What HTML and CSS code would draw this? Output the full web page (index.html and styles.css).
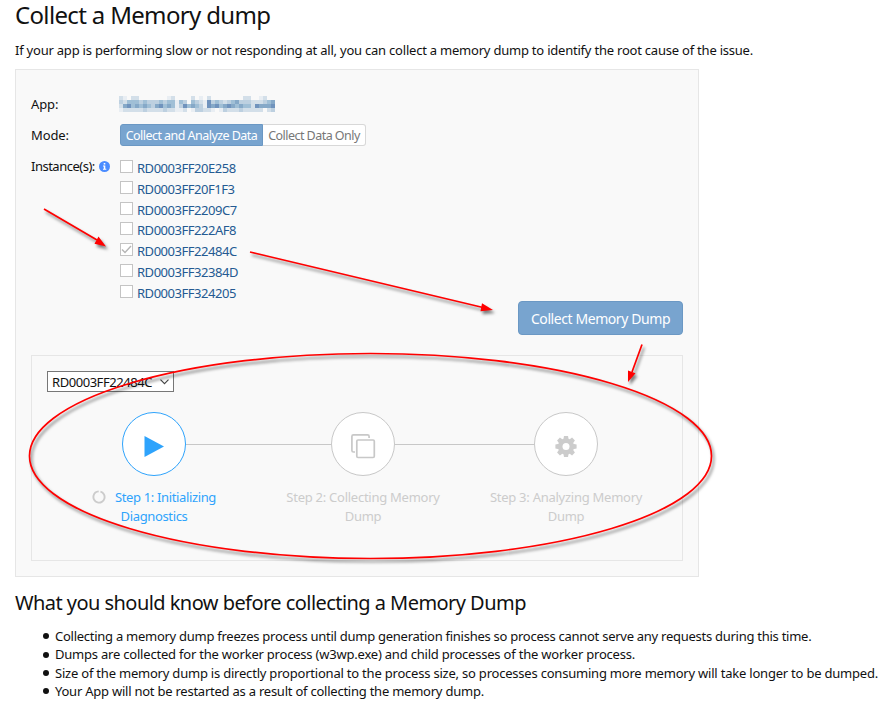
FILE: index.html
```html
<!DOCTYPE html>
<html lang="en">
<head>
<meta charset="utf-8">
<title>Collect a Memory dump</title>
<link rel="stylesheet" href="styles.css">
</head>
<body>
<main class="page">
  <h1 class="title">Collect a Memory dump</h1>
  <p class="intro">If your app is performing slow or not responding at all, you can collect a memory dump to identify the root cause of the issue.</p>

  <section class="panel">
    <div class="row row-app">
      <div class="label">App:</div>
      <svg class="redacted" width="164" height="16" shape-rendering="crispEdges" aria-hidden="true"></svg>
    </div>
    <div class="row row-mode">
      <div class="label">Mode:</div>
      <div class="toggle"><button class="on">Collect and Analyze Data</button><button class="off">Collect Data Only</button></div>
    </div>
    <div class="row row-instances">
      <div class="label label-info"><span>Instance(s):</span>
        <svg class="info" width="11" height="11" viewBox="0 0 11 11"><circle cx="5.5" cy="5.5" r="5.5" fill="#4a8cff"/><path d="M4 4.500h2.300v3.300h1v1H4v-1h.8V5.500H4zM4.700 2h1.600v1.500H4.700z" fill="#fff"/></svg>
      </div>
      <ul class="instances">
        <li><i class="box"></i><span>RD0003FF20E258</span></li>
        <li><i class="box"></i><span>RD0003FF20F1F3</span></li>
        <li><i class="box"></i><span>RD0003FF2209C7</span></li>
        <li><i class="box"></i><span>RD0003FF222AF8</span></li>
        <li><i class="box"><svg width="11" height="11" viewBox="0 0 11 11"><path d="M1 5.500L4 8.500L10 2" fill="none" stroke="#b5b5b5" stroke-width="1.400"/></svg></i><span>RD0003FF22484C</span></li>
        <li><i class="box"></i><span>RD0003FF32384D</span></li>
        <li><i class="box"></i><span>RD0003FF324205</span></li>
      </ul>
    </div>
    <div class="actions"><button class="primary">Collect Memory Dump</button></div>

    <div class="progress">
      <div class="select"><span>RD0003FF22484C</span><svg width="9" height="6" viewBox="0 0 9 6"><path d="M.5.7L4.500 4.700L8.500.7" fill="none" stroke="#444" stroke-width="1.100"/></svg></div>
      <div class="track">
        <div class="circle active"><svg width="64" height="64"><path d="M22.500 24L42 34.500L22.500 45z" fill="#2ea3fc"/></svg></div>
        <div class="line line-a"></div>
        <div class="circle"><svg width="64" height="64" fill="none" stroke="#c8c8c8" stroke-width="1.700"><path d="M24 40h-1.500q-1.600 0-1.600-1.600v-14q0-1.600 1.600-1.600h14q1.600 0 1.600 1.600V26"/><rect x="25.800" y="28" width="17.500" height="17.500" rx="1.200"/></svg></div>
        <div class="line line-b"></div>
        <div class="circle"><svg width="64" height="64"><g transform="translate(32 34.500)" fill="#ccc"><circle r="8"/><g id="teeth"><path d="M-2.700-7L-2-10.600H2L2.700-7z"/><path d="M-2.700-7L-2-10.600H2L2.700-7z" transform="rotate(45)"/><path d="M-2.700-7L-2-10.600H2L2.700-7z" transform="rotate(90)"/><path d="M-2.700-7L-2-10.600H2L2.700-7z" transform="rotate(135)"/></g><use href="#teeth" transform="rotate(180)"/><circle r="3.500" fill="#fff"/></g></svg></div>
      </div>
      <div class="steps">
        <div class="step step-1"><svg class="spinner" width="14" height="14" viewBox="0 0 14 14"><circle cx="7" cy="7" r="5.600" fill="none" stroke="#ccc" stroke-width="1.900" stroke-dasharray="32.500 2.700" transform="rotate(-75 7 7)"/></svg><span>Step 1: Initializing</span><br>Diagnostics</div>
        <div class="step step-2">Step 2: Collecting Memory<br>Dump</div>
        <div class="step step-3">Step 3: Analyzing Memory<br>Dump</div>
      </div>
    </div>
  </section>

  <h2 class="subtitle">What you should know before collecting a Memory Dump</h2>
  <ul class="notes">
    <li class="note-a">Collecting a memory dump freezes process until dump generation finishes so process cannot serve any requests during this time.</li>
    <li class="note-b">Dumps are collected for the worker process (w3wp.exe) and child processes of the worker process.</li>
    <li class="note-c">Size of the memory dump is directly proportional to the process size, so processes consuming more memory will take longer to be dumped.</li>
    <li class="note-d">Your App will not be restarted as a result of collecting the memory dump.</li>
  </ul>
</main>
<svg class="annotations" width="890" height="712" aria-hidden="true">
  <g class="marks">
    <ellipse cx="370.500" cy="456" rx="341" ry="102.500"/>
    <path d="M44 209L97 240M250 252L483 307.500M642 344.500L632 372"/>
    <path class="head" d="M106 246.500L94.500 243.700L98.500 236.500zM493 310L480.500 311.300L482 303.300zM628 382L628 370.500L635.500 373.200z"/>
  </g>
</svg>
<script src="redact.js"></script>
</body>
</html>
```
FILE: redact.js
```js
// Pixelated app name: one digit per 4px cell, from clear (0) to dark (6).
const shades = ["", "#e9eef3", "#d3dfe9", "#bdd0e0", "#a0bfd6", "#86a9c8", "#7093bd"];
const rows = [
  "2102200000001200002010200000000220012000",
  "3244434333434414304321634323453332223450",
  "2564545435645413645431656456545442655560",
  "1222223222232211201332210132223222220230"
];
const svg = document.querySelector(".redacted");
rows.forEach((row, y) => [...row].forEach((level, x) => {
  if (level === "0") return;
  const cell = document.createElementNS("http://www.w3.org/2000/svg", "rect");
  cell.setAttribute("x", x * 4);
  cell.setAttribute("y", y * 4);
  cell.setAttribute("width", 4);
  cell.setAttribute("height", 4);
  cell.setAttribute("fill", shades[level]);
  svg.append(cell);
}));
```
FILE: styles.css
```css
* { box-sizing: border-box; }
body { margin: 0; background: #fff; color: #111; font: 13px/18px "Noto Sans", "Open Sans", sans-serif; overflow: hidden; }
.page { padding: 0 11px 0 15px; white-space: nowrap; }
.title { margin: 0; height: 41px; font-size: 24px; line-height: 29px; font-weight: 400; letter-spacing: -.66px; }
.intro { margin: 0; height: 28px; letter-spacing: -.218px; }
.panel { width: 684px; height: 508px; padding: 25px 15px 15px; background: #f9f9f9; border: 1px solid #e6e6e6; }
.row { display: flex; }
.label { width: 89px; letter-spacing: -.1px; }
.label-info { display: flex; gap: 4px; letter-spacing: -.5px; }
.row-app { height: 29px; }
.redacted { margin: 1px 0 0 -1px; }
.row-mode { height: 32px; }
.row-mode .label { padding-top: 2px; }
.toggle { display: flex; height: 22px; }
button { font: inherit; padding: 0; border: 1px solid; white-space: nowrap; }
.toggle button { padding-top: 2px; font-size: 12.500px; letter-spacing: -.54px; }
.on { width: 143px; color: #fff; background: #78a4cf; border-color: #6b98c4; border-radius: 3px 0 0 3px; }
.off { width: 103px; color: #777; background: #fff; border-color: #d8d8d8; border-left: 0; border-radius: 0 3px 3px 0; }
.row-instances { height: 145px; }
.row-instances .label { padding-top: 1px; }
.info { margin-top: 4px; }
.instances { margin: 2px 0 0; padding: 0; list-style: none; color: #245a92; letter-spacing: -.47px; }
.instances li { display: flex; gap: 4px; height: 20.750px; }
.instances span { padding-top: 1px; }
.box { width: 13px; height: 13px; margin-top: 2px; border: 1px solid #c4c4c4; background: #fff; }
.box svg { display: block; }
.actions { display: flex; justify-content: flex-end; height: 54px; }
.primary { width: 165px; height: 34px; padding-top: 2px; color: #fff; background: #78a4cf; border-color: #6b98c4; border-radius: 4px; font-size: 14px; letter-spacing: -.42px; }
.progress { height: 206px; padding: 15px; border: 1px solid #e6e6e6; }
.select { display: flex; align-items: center; justify-content: space-between; width: 127px; height: 21px; padding: 1px 4px; border: 1px solid #777; background: #fff; letter-spacing: -.45px; }
.track { display: flex; align-items: center; height: 64px; margin: 20px 0 0 75px; }
.circle { width: 64px; height: 64px; border: 1px solid #c8c8c8; border-radius: 50%; background: #fff; }
.circle svg { display: block; margin: -1px; }
.circle.active { border-color: #2ea3fc; }
.line { height: 1px; background: #c8c8c8; }
.line-a { width: 145px; }
.line-b { width: 139px; }
.steps { display: flex; margin-top: 12px; color: #ccc; text-align: center; line-height: 19px; letter-spacing: -.26px; }
.step-1 { width: 162px; margin-left: 26px; color: #2ea3fc; letter-spacing: -.36px; }
.spinner { margin-right: 9px; vertical-align: -2px; }
.step-2 { width: 162px; margin-left: 47px; }
.step-3 { width: 162px; margin-left: 41px; }
.subtitle { margin: 12px 0 0; font-size: 20px; line-height: 28px; font-weight: 400; letter-spacing: -.55px; }
.notes { margin: 10px 0 0; padding: 0 0 0 40px; line-height: 18.400px; list-style: none; }
.notes li { display: flex; align-items: center; }
.notes li::before { content: ""; width: 6px; height: 6px; margin: 0 6px 0 -12px; border-radius: 50%; background: #111; }
.note-a { letter-spacing: -.266px; }
.note-b { letter-spacing: -.21px; }
.note-c { letter-spacing: -.211px; }
.note-d { letter-spacing: -.235px; }
.annotations { position: absolute; left: 0; top: 0; pointer-events: none; }
.marks { fill: none; stroke: #f00; stroke-width: 1.700; filter: drop-shadow(2px 3px 1.500px rgba(0, 0, 0, .5)); }
.marks .head { fill: #f00; stroke: none; }
```
